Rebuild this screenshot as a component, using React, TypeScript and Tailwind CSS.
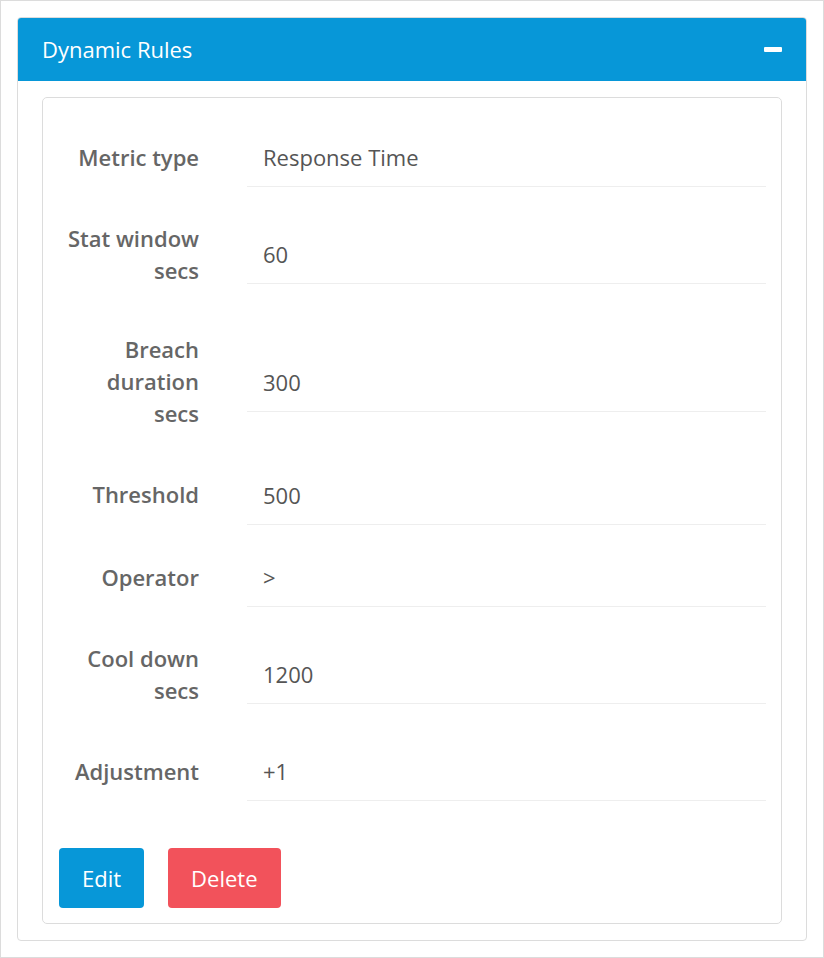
import React from "react";

const rows: { label: string; value: string }[] = [
  { label: "Metric type", value: "Response Time" },
  { label: "Stat window secs", value: "60" },
  { label: "Breach duration secs", value: "300" },
  { label: "Threshold", value: "500" },
  { label: "Operator", value: ">" },
  { label: "Cool down secs", value: "1200" },
  { label: "Adjustment", value: "+1" },
];

const App: React.FC = () => {
  return (
    <div
      className="w-[824px] border border-[#dcdcdc] p-4 bg-white"
      style={{ fontFamily: '"Open Sans", "Liberation Sans", sans-serif' }}
    >
      <section className="border border-[#dcdcdc] rounded-[4px] overflow-hidden">
        <header className="h-[63px] bg-[#0797d8] flex items-center justify-between pl-6 pr-6">
          <h1 className="text-[22px] text-white font-normal">Dynamic Rules</h1>
          <span className="block w-[18px] h-[5px] bg-white rounded-[1px]" />
        </header>

        <div className="px-6 pt-4 pb-4">
          <div className="border border-[#dcdcdc] rounded-[5px] pl-4 pr-[15px] pt-[35px] pb-[15px]">
            <div className="flex flex-col gap-[28.5px]">
              {rows.map((r) => (
                <div key={r.label} className="flex items-center">
                  <div className="w-[188px] shrink-0 pr-[48px] pt-[6px] pb-[13px] text-right text-[22px] leading-[32px] font-semibold text-[#666666]">
                    {r.label}
                  </div>
                  <div className="flex-1 h-[54px] flex items-center pl-4 pb-[4px] border-b border-[#eeeeee] text-[22px] text-[#555555]">
                    {r.value}
                  </div>
                </div>
              ))}
            </div>

            <div className="flex gap-6 mt-[47px]">
              <button className="h-[60px] px-[23px] rounded-[4px] bg-[#0797d8] text-white text-[22px]">Edit</button>
              <button className="h-[60px] px-[23px] rounded-[4px] bg-[#f2525b] text-white text-[22px]">Delete</button>
            </div>
          </div>
        </div>
      </section>
    </div>
  );
};

export default App;
